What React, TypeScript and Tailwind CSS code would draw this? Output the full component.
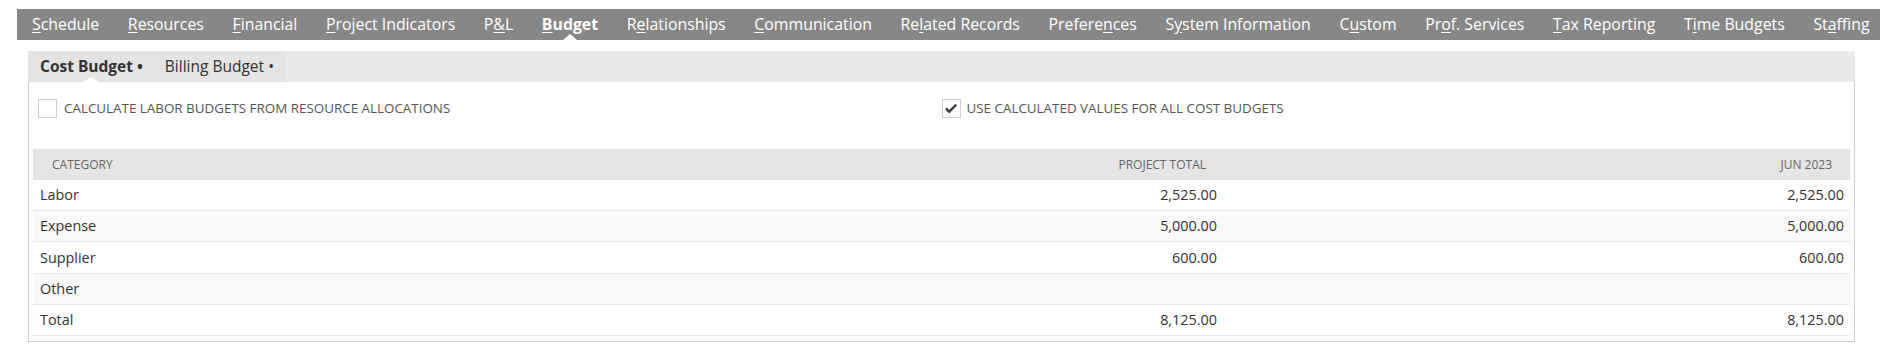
import React from "react"

type NavItem = { label: string; key: number; active?: boolean }

const navItems: NavItem[] = [
  { label: "Schedule", key: 0 },
  { label: "Resources", key: 0 },
  { label: "Financial", key: 0 },
  { label: "Project Indicators", key: 0 },
  { label: "P&L", key: 1 },
  { label: "Budget", key: 0, active: true },
  { label: "Relationships", key: 1 },
  { label: "Communication", key: 0 },
  { label: "Related Records", key: 2 },
  { label: "Preferences", key: 7 },
  { label: "System Information", key: 1 },
  { label: "Custom", key: 1 },
  { label: "Prof. Services", key: 2 },
  { label: "Tax Reporting", key: 0 },
  { label: "Time Budgets", key: 1 },
  { label: "Staffing", key: 2 },
]

const rows = [
  { name: "Labor", total: "2,525.00", jun: "2,525.00" },
  { name: "Expense", total: "5,000.00", jun: "5,000.00" },
  { name: "Supplier", total: "600.00", jun: "600.00" },
  { name: "Other", total: "", jun: "" },
  { name: "Total", total: "8,125.00", jun: "8,125.00" },
]

function AccessLabel({ label, k }: { label: string; k: number }) {
  return (
    <>
      {label.slice(0, k)}
      <span className="underline underline-offset-2">{label[k]}</span>
      {label.slice(k + 1)}
    </>
  )
}

function Checkbox({ checked }: { checked?: boolean }) {
  return (
    <span className="w-[19px] h-[19px] border border-[#cfcfcf] bg-white flex items-center justify-center shrink-0">
      {checked && (
        <svg width="14" height="12" viewBox="0 0 14 12">
          <path d="M1 6.2 L3 4.6 L5.2 7 L11.6 0.8 L13 2.4 L5.3 10.6 Z" fill="#3a3a3a" />
        </svg>
      )}
    </span>
  )
}

export default function App() {
  return (
    <div className="w-[1888px] h-[361px] bg-white pt-[9px] font-['Open_Sans',sans-serif]">
      <nav className="ml-[17px] mr-[8px] h-[31px] bg-[#878787] flex items-center pl-[15px] gap-[28.65px] text-white text-[15.85px] whitespace-nowrap overflow-hidden">
        {navItems.map((item) => (
          <span key={item.label} className={`relative h-full flex items-center ${item.active ? "font-bold" : ""}`}>
            <AccessLabel label={item.label} k={item.key} />
            {item.active && (
              <span className="absolute bottom-0 left-1/2 -translate-x-1/2 w-0 h-0 border-x-[7px] border-x-transparent border-b-[6px] border-b-white" />
            )}
          </span>
        ))}
      </nav>

      <div className="ml-[28px] mr-[33px] mt-[11px]">
        <div className="h-[31px] bg-[#e9e9e9] flex">
          <div className="bg-[#e4e4e4] flex items-center pl-[12px] pr-[12px] gap-[22px] text-[15.5px] text-[#333] whitespace-nowrap">
            <span className="relative h-full flex items-center font-bold">
              Cost Budget •
              <span className="absolute bottom-0 left-1/2 -translate-x-1/2 w-0 h-0 border-x-[8px] border-x-transparent border-b-[5px] border-b-white" />
            </span>
            <span>Billing Budget •</span>
          </div>
        </div>

        <div className="border-x border-b border-[#cccccc] px-[4px] pb-[5px]">
          <div className="grid grid-cols-2 pt-[17px] h-[67px] text-[13.4px] text-[#555]">
            <label className="flex items-center gap-[7px] pl-[5px] h-[19px]">
              <Checkbox />
              <span>CALCULATE LABOR BUDGETS FROM RESOURCE ALLOCATIONS</span>
            </label>
            <label className="flex items-center gap-[6px] h-[19px]">
              <Checkbox checked />
              <span>USE CALCULATED VALUES FOR ALL COST BUDGETS</span>
            </label>
          </div>

          <div className="text-[14.4px] text-[#333]">
            <div className="grid grid-cols-[1fr_600px_627px] h-[31px] items-center bg-[#e5e5e5] text-[12px] text-[#666] px-[18px]">
              <span className="pl-[1px]">CATEGORY</span>
              <span className="text-right -mr-[1px]">PROJECT TOTAL</span>
              <span className="text-right">JUN 2023</span>
            </div>
            {rows.map((r, i) => (
              <div
                key={r.name}
                className={`grid grid-cols-[1fr_600px_627px] h-[31.2px] items-center border-b border-[#e6e6e6] pl-[7px] pr-[6px] ${i % 2 === 1 ? "bg-[#f9f9f9]" : "bg-white"}`}
              >
                <span>{r.name}</span>
                <span className="text-right">{r.total}</span>
                <span className="text-right">{r.jun}</span>
              </div>
            ))}
          </div>
        </div>
      </div>
    </div>
  )
}
